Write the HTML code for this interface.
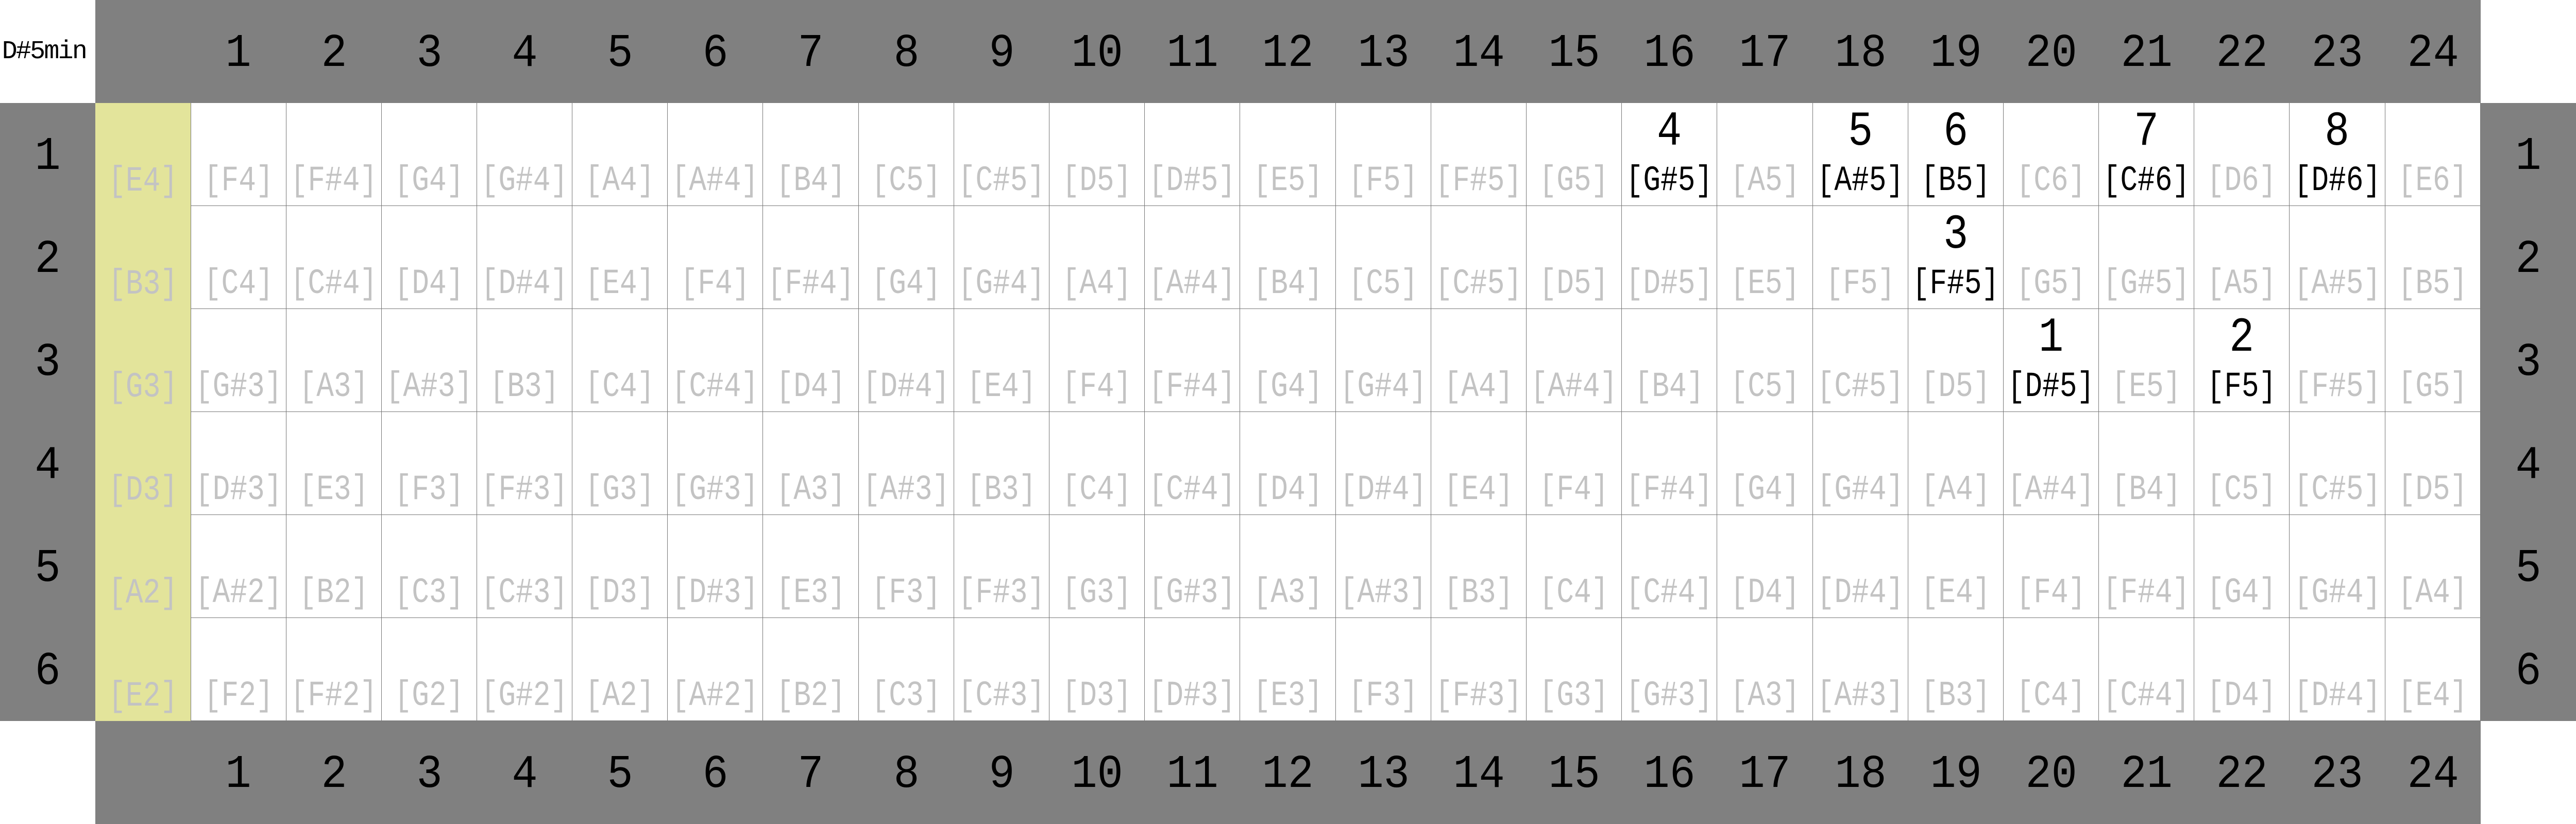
<!DOCTYPE html>
<html><head><meta charset="utf-8"><style>
html,body{margin:0;padding:0;background:#fff;overflow:hidden;}
:root{--u:calc(100vw / 5400);}
#g{display:grid;grid-template-columns:repeat(27,1fr);grid-template-rows:repeat(8,1fr);width:100vw;height:100vh;font-family:"Liberation Mono",monospace;}
#g>div{position:relative;box-sizing:border-box;overflow:hidden;min-width:0;min-height:0;}
.e{background:#fff;}
.g{background:#808080;}
.y{background:#e3e49b;}
.w{background:#fff;border-right:1px solid #777;border-bottom:1px solid #777;}
.f{border-left:1px solid #777;}
.h{font-size:calc(var(--u)*98);line-height:1;text-align:center;position:absolute;left:0;right:0;top:30%;color:#000;transform:scaleX(0.92);}
.t{font-size:calc(var(--u)*54);line-height:1;position:absolute;left:2%;top:38%;color:#000;letter-spacing:calc(var(--u)*-3);}
i{font-style:normal;font-size:calc(var(--u)*74);line-height:1;position:absolute;left:-20%;right:-20%;text-align:center;top:59%;color:#c3c3c3;white-space:nowrap;transform:scaleX(0.82);}
i.k{color:#000;}
b{font-weight:normal;font-size:calc(var(--u)*102);line-height:1;position:absolute;left:0;right:0;text-align:center;top:5%;color:#000;transform:scaleX(0.85);}
</style></head><body><div id="g">
<div class="e"><span class="t">D#5min</span></div><div class="g"></div><div class="g"><span class="h">1</span></div><div class="g"><span class="h">2</span></div><div class="g"><span class="h">3</span></div><div class="g"><span class="h">4</span></div><div class="g"><span class="h">5</span></div><div class="g"><span class="h">6</span></div><div class="g"><span class="h">7</span></div><div class="g"><span class="h">8</span></div><div class="g"><span class="h">9</span></div><div class="g"><span class="h">10</span></div><div class="g"><span class="h">11</span></div><div class="g"><span class="h">12</span></div><div class="g"><span class="h">13</span></div><div class="g"><span class="h">14</span></div><div class="g"><span class="h">15</span></div><div class="g"><span class="h">16</span></div><div class="g"><span class="h">17</span></div><div class="g"><span class="h">18</span></div><div class="g"><span class="h">19</span></div><div class="g"><span class="h">20</span></div><div class="g"><span class="h">21</span></div><div class="g"><span class="h">22</span></div><div class="g"><span class="h">23</span></div><div class="g"><span class="h">24</span></div><div class="e"></div>

<div class="g"><span class="h">1</span></div><div class="y"><i>[E4]</i></div>
<div class="w f"><i>[F4]</i></div><div class="w"><i>[F#4]</i></div><div class="w"><i>[G4]</i></div><div class="w"><i>[G#4]</i></div><div class="w"><i>[A4]</i></div><div class="w"><i>[A#4]</i></div><div class="w"><i>[B4]</i></div><div class="w"><i>[C5]</i></div><div class="w"><i>[C#5]</i></div><div class="w"><i>[D5]</i></div><div class="w"><i>[D#5]</i></div><div class="w"><i>[E5]</i></div><div class="w"><i>[F5]</i></div><div class="w"><i>[F#5]</i></div><div class="w"><i>[G5]</i></div><div class="w"><b>4</b><i class="k">[G#5]</i></div><div class="w"><i>[A5]</i></div><div class="w"><b>5</b><i class="k">[A#5]</i></div><div class="w"><b>6</b><i class="k">[B5]</i></div><div class="w"><i>[C6]</i></div><div class="w"><b>7</b><i class="k">[C#6]</i></div><div class="w"><i>[D6]</i></div><div class="w"><b>8</b><i class="k">[D#6]</i></div><div class="w"><i>[E6]</i></div>
<div class="g"><span class="h">1</span></div>

<div class="g"><span class="h">2</span></div><div class="y"><i>[B3]</i></div>
<div class="w f"><i>[C4]</i></div><div class="w"><i>[C#4]</i></div><div class="w"><i>[D4]</i></div><div class="w"><i>[D#4]</i></div><div class="w"><i>[E4]</i></div><div class="w"><i>[F4]</i></div><div class="w"><i>[F#4]</i></div><div class="w"><i>[G4]</i></div><div class="w"><i>[G#4]</i></div><div class="w"><i>[A4]</i></div><div class="w"><i>[A#4]</i></div><div class="w"><i>[B4]</i></div><div class="w"><i>[C5]</i></div><div class="w"><i>[C#5]</i></div><div class="w"><i>[D5]</i></div><div class="w"><i>[D#5]</i></div><div class="w"><i>[E5]</i></div><div class="w"><i>[F5]</i></div><div class="w"><b>3</b><i class="k">[F#5]</i></div><div class="w"><i>[G5]</i></div><div class="w"><i>[G#5]</i></div><div class="w"><i>[A5]</i></div><div class="w"><i>[A#5]</i></div><div class="w"><i>[B5]</i></div>
<div class="g"><span class="h">2</span></div>

<div class="g"><span class="h">3</span></div><div class="y"><i>[G3]</i></div>
<div class="w f"><i>[G#3]</i></div><div class="w"><i>[A3]</i></div><div class="w"><i>[A#3]</i></div><div class="w"><i>[B3]</i></div><div class="w"><i>[C4]</i></div><div class="w"><i>[C#4]</i></div><div class="w"><i>[D4]</i></div><div class="w"><i>[D#4]</i></div><div class="w"><i>[E4]</i></div><div class="w"><i>[F4]</i></div><div class="w"><i>[F#4]</i></div><div class="w"><i>[G4]</i></div><div class="w"><i>[G#4]</i></div><div class="w"><i>[A4]</i></div><div class="w"><i>[A#4]</i></div><div class="w"><i>[B4]</i></div><div class="w"><i>[C5]</i></div><div class="w"><i>[C#5]</i></div><div class="w"><i>[D5]</i></div><div class="w"><b>1</b><i class="k">[D#5]</i></div><div class="w"><i>[E5]</i></div><div class="w"><b>2</b><i class="k">[F5]</i></div><div class="w"><i>[F#5]</i></div><div class="w"><i>[G5]</i></div>
<div class="g"><span class="h">3</span></div>

<div class="g"><span class="h">4</span></div><div class="y"><i>[D3]</i></div>
<div class="w f"><i>[D#3]</i></div><div class="w"><i>[E3]</i></div><div class="w"><i>[F3]</i></div><div class="w"><i>[F#3]</i></div><div class="w"><i>[G3]</i></div><div class="w"><i>[G#3]</i></div><div class="w"><i>[A3]</i></div><div class="w"><i>[A#3]</i></div><div class="w"><i>[B3]</i></div><div class="w"><i>[C4]</i></div><div class="w"><i>[C#4]</i></div><div class="w"><i>[D4]</i></div><div class="w"><i>[D#4]</i></div><div class="w"><i>[E4]</i></div><div class="w"><i>[F4]</i></div><div class="w"><i>[F#4]</i></div><div class="w"><i>[G4]</i></div><div class="w"><i>[G#4]</i></div><div class="w"><i>[A4]</i></div><div class="w"><i>[A#4]</i></div><div class="w"><i>[B4]</i></div><div class="w"><i>[C5]</i></div><div class="w"><i>[C#5]</i></div><div class="w"><i>[D5]</i></div>
<div class="g"><span class="h">4</span></div>

<div class="g"><span class="h">5</span></div><div class="y"><i>[A2]</i></div>
<div class="w f"><i>[A#2]</i></div><div class="w"><i>[B2]</i></div><div class="w"><i>[C3]</i></div><div class="w"><i>[C#3]</i></div><div class="w"><i>[D3]</i></div><div class="w"><i>[D#3]</i></div><div class="w"><i>[E3]</i></div><div class="w"><i>[F3]</i></div><div class="w"><i>[F#3]</i></div><div class="w"><i>[G3]</i></div><div class="w"><i>[G#3]</i></div><div class="w"><i>[A3]</i></div><div class="w"><i>[A#3]</i></div><div class="w"><i>[B3]</i></div><div class="w"><i>[C4]</i></div><div class="w"><i>[C#4]</i></div><div class="w"><i>[D4]</i></div><div class="w"><i>[D#4]</i></div><div class="w"><i>[E4]</i></div><div class="w"><i>[F4]</i></div><div class="w"><i>[F#4]</i></div><div class="w"><i>[G4]</i></div><div class="w"><i>[G#4]</i></div><div class="w"><i>[A4]</i></div>
<div class="g"><span class="h">5</span></div>

<div class="g"><span class="h">6</span></div><div class="y"><i>[E2]</i></div>
<div class="w f"><i>[F2]</i></div><div class="w"><i>[F#2]</i></div><div class="w"><i>[G2]</i></div><div class="w"><i>[G#2]</i></div><div class="w"><i>[A2]</i></div><div class="w"><i>[A#2]</i></div><div class="w"><i>[B2]</i></div><div class="w"><i>[C3]</i></div><div class="w"><i>[C#3]</i></div><div class="w"><i>[D3]</i></div><div class="w"><i>[D#3]</i></div><div class="w"><i>[E3]</i></div><div class="w"><i>[F3]</i></div><div class="w"><i>[F#3]</i></div><div class="w"><i>[G3]</i></div><div class="w"><i>[G#3]</i></div><div class="w"><i>[A3]</i></div><div class="w"><i>[A#3]</i></div><div class="w"><i>[B3]</i></div><div class="w"><i>[C4]</i></div><div class="w"><i>[C#4]</i></div><div class="w"><i>[D4]</i></div><div class="w"><i>[D#4]</i></div><div class="w"><i>[E4]</i></div>
<div class="g"><span class="h">6</span></div>

<div class="e"></div><div class="g"></div><div class="g"><span class="h">1</span></div><div class="g"><span class="h">2</span></div><div class="g"><span class="h">3</span></div><div class="g"><span class="h">4</span></div><div class="g"><span class="h">5</span></div><div class="g"><span class="h">6</span></div><div class="g"><span class="h">7</span></div><div class="g"><span class="h">8</span></div><div class="g"><span class="h">9</span></div><div class="g"><span class="h">10</span></div><div class="g"><span class="h">11</span></div><div class="g"><span class="h">12</span></div><div class="g"><span class="h">13</span></div><div class="g"><span class="h">14</span></div><div class="g"><span class="h">15</span></div><div class="g"><span class="h">16</span></div><div class="g"><span class="h">17</span></div><div class="g"><span class="h">18</span></div><div class="g"><span class="h">19</span></div><div class="g"><span class="h">20</span></div><div class="g"><span class="h">21</span></div><div class="g"><span class="h">22</span></div><div class="g"><span class="h">23</span></div><div class="g"><span class="h">24</span></div><div class="e"></div>
</div></body></html>
